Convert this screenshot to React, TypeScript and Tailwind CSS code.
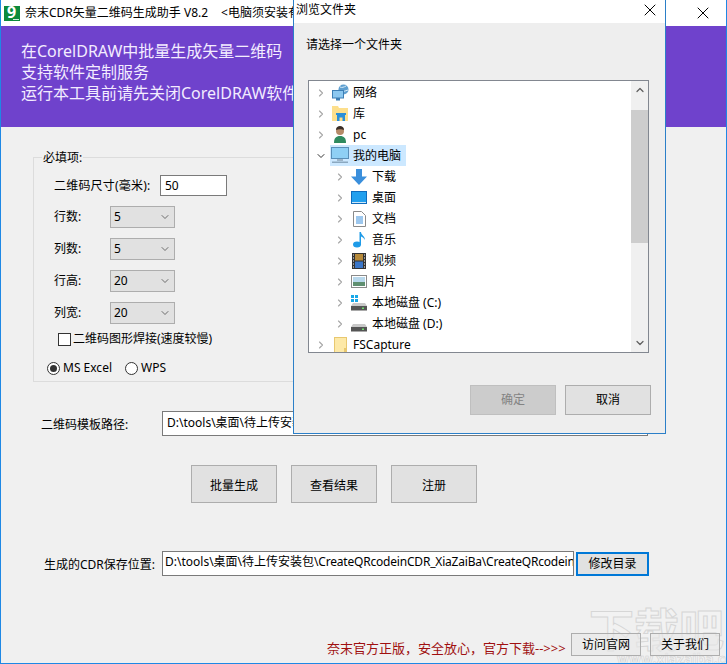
import { ChevronRight, ChevronDown, X } from 'lucide-react';

const FONT = "font-['Noto_Sans','Noto_Sans_CJK_SC',sans-serif]";

const SELECTS = [
  { label: '行数:', value: '5' },
  { label: '列数:', value: '5' },
  { label: '行高:', value: '20' },
  { label: '列宽:', value: '20' },
];

function Select({ value }: { value: string }) {
  return (
    <div className="w-[65px] h-[22px] bg-[#e1e1e1] border border-[#adadad] flex items-center justify-between pl-[3px] pr-[3px] text-[12px] text-black">
      <span>{value}</span>
      <ChevronDown className="w-[12px] h-[12px] text-[#444]" strokeWidth={1.5} />
    </div>
  );
}

function Btn({ label, className = 'bg-[#e1e1e1]' }: { label: string; className?: string }) {
  return (
    <div className={`border border-[#adadad] flex items-center justify-center text-[12px] text-black ${className}`}>
      {label}
    </div>
  );
}

/* tree icons */
function NetIcon() {
  return (
    <svg width="17" height="17" viewBox="0 0 17 17">
      <circle cx="11.5" cy="5.5" r="5" fill="#5f9fd0" />
      <path d="M8 3c2 1 4 0 6-1M8 7c3 1 5 0 8-1" stroke="#d8ecf8" fill="none" />
      <rect x="0.5" y="6.5" width="11" height="7.5" fill="#8cc8f0" stroke="#3d7fb5" />
      <rect x="4" y="14" width="4" height="2.5" fill="#3d7fb5" />
    </svg>
  );
}
function LibIcon() {
  return (
    <svg width="17" height="17" viewBox="0 0 17 17">
      <path d="M0 1h6l1 2h9v13H0z" fill="#fddf8c" />
      <path d="M5 9h8v7h-2.5v-3.5h-3V16H5z" fill="#2b8fd8" />
      <rect x="4" y="8" width="10" height="2" fill="#2b8fd8" />
    </svg>
  );
}
function UserIcon() {
  return (
    <svg width="15" height="17" viewBox="0 0 15 17">
      <path d="M1 17c0-5 2-7 6-7s6 2 6 7z" fill="#2f8a5f" />
      <circle cx="7" cy="5" r="4" fill="#b58a68" />
      <path d="M3 4c0-3 2-4 4-4s4 1 4 4c-2-1-6-1-8 0z" fill="#3a2d25" />
    </svg>
  );
}
function PcIcon() {
  return (
    <svg width="18" height="17" viewBox="0 0 18 17">
      <rect x="0.5" y="0.5" width="17" height="11" fill="#8fd0f5" stroke="#5a8fb8" />
      <rect x="6" y="12" width="6" height="2" fill="#9cb4c8" />
      <rect x="1" y="14.5" width="16" height="1.5" fill="#8aa8c0" />
    </svg>
  );
}
function DownIcon() {
  return (
    <svg width="16" height="16" viewBox="0 0 16 16">
      <path d="M5 0h6v7.500h5L8 16 0 7.500h5z" fill="#3a8fdc" />
    </svg>
  );
}
function DesktopIcon() {
  return (
    <svg width="16" height="13" viewBox="0 0 16 13">
      <rect width="16" height="13" fill="#0f6cbd" />
      <rect x="1" y="1" width="14" height="10" fill="#22a0ee" />
      <rect x="1" y="11" width="14" height="1" fill="#cfe8f8" />
    </svg>
  );
}
function DocIcon() {
  return (
    <svg width="13" height="16" viewBox="0 0 13 16">
      <path d="M.5.500h8l4 4v11H.5z" fill="#fff" stroke="#8a8a8a" />
      <path d="M3 6h7M3 8h7M3 10h7M3 12h7" stroke="#3a8fdc" />
    </svg>
  );
}
function MusicIcon() {
  return (
    <svg width="13" height="17" viewBox="0 0 13 17">
      <ellipse cx="4" cy="13.500" rx="4" ry="3" fill="#1e9be8" />
      <path d="M6.500 1h1.500c0 3 4 4 4 8-1-2-2.500-3-4-3.500V14h-1.500z" fill="#1e9be8" />
    </svg>
  );
}
function VideoIcon() {
  return (
    <svg width="14" height="16" viewBox="0 0 14 16">
      <rect width="14" height="16" fill="#333" />
      <rect x="3" y="1" width="8" height="6.500" fill="#b78a3a" />
      <rect x="3" y="8.500" width="8" height="6.500" fill="#3a76c8" />
      <path d="M1 2h1M1 5h1M1 8h1M1 11h1M1 14h1M12 2h1M12 5h1M12 8h1M12 11h1M12 14h1" stroke="#fff" />
    </svg>
  );
}
function PicIcon() {
  return (
    <svg width="16" height="13" viewBox="0 0 16 13">
      <rect x=".5" y=".5" width="15" height="12" fill="#fff" stroke="#8a8a8a" />
      <rect x="2" y="2" width="12" height="5" fill="#b8d8ec" />
      <rect x="2" y="7" width="12" height="4" fill="#5f8f70" />
    </svg>
  );
}
function DriveIcon({ win }: { win?: boolean }) {
  return (
    <svg width="16" height="16" viewBox="0 0 16 16">
      {win && <path d="M0 0h3v3H0zM4 0h3v3H4zM0 4h3v3H0zM4 4h3v3H4z" fill="#18a8e8" />}
      <path d="M2 8h12l2 3H0z" fill="#c9c9c9" />
      <rect y="11" width="16" height="4.500" fill="#555" />
      <rect x="11" y="12.500" width="2" height="1.500" fill="#6fe06f" />
    </svg>
  );
}
function FolderIcon() {
  return (
    <svg width="13" height="16" viewBox="0 0 13 16">
      <rect x=".5" y=".5" width="12" height="15" fill="#fde9a8" stroke="#e8c870" />
      <rect x="10" y="11" width="2" height="4" fill="#e8c870" />
    </svg>
  );
}

const TREE = [
  { label: '网络', icon: <NetIcon />, depth: 0 },
  { label: '库', icon: <LibIcon />, depth: 0 },
  { label: 'pc', icon: <UserIcon />, depth: 0 },
  { label: '我的电脑', icon: <PcIcon />, depth: 0, open: true },
  { label: '下载', icon: <DownIcon />, depth: 1 },
  { label: '桌面', icon: <DesktopIcon />, depth: 1 },
  { label: '文档', icon: <DocIcon />, depth: 1 },
  { label: '音乐', icon: <MusicIcon />, depth: 1 },
  { label: '视频', icon: <VideoIcon />, depth: 1 },
  { label: '图片', icon: <PicIcon />, depth: 1 },
  { label: '本地磁盘 (C:)', icon: <DriveIcon win />, depth: 1 },
  { label: '本地磁盘 (D:)', icon: <DriveIcon />, depth: 1 },
  { label: 'FSCapture', icon: <FolderIcon />, depth: 0 },
];

function FolderDialog() {
  return (
    <div className="absolute left-[292px] top-0 w-[373px] h-[434px] border border-t-0 border-[#2b7fc8] bg-[#eeeeee] flex flex-col">
      <div className="h-[23px] bg-white flex items-center justify-between pl-[2px] pr-[5px] pb-[3px] text-[12px] text-black">
        <span>浏览文件夹</span>
        <X className="w-[20px] h-[20px] text-black" strokeWidth={1.2} />
      </div>
      <div className="pl-[12px] pt-[13px] text-[12px] leading-[18px] text-black">请选择一个文件夹</div>
      <div className="ml-[14px] mt-[26px] w-[341px] h-[273px] bg-white border border-[#828790] flex overflow-hidden">
        <div className="flex-1 pt-[1px] overflow-hidden">
          {TREE.map(row => (
            <div key={row.label} className="h-[21px] flex items-center text-[12px] text-black">
              <div className={`w-[21px] shrink-0 flex justify-end pr-[3px] ${row.depth ? 'ml-[19px]' : ''}`}>
                {row.open
                  ? <ChevronDown className="w-[12px] h-[12px] text-[#333]" strokeWidth={2} />
                  : <ChevronRight className="w-[12px] h-[12px] text-[#a6a6a6]" strokeWidth={2.25} />}
              </div>
              <div className={`h-[21px] flex items-center ${row.open ? 'bg-[#cce8ff]' : ''}`}>
                <div className="w-[20px] shrink-0 flex justify-center">{row.icon}</div>
                <span className="ml-[3px] pr-[5px]">{row.label}</span>
              </div>
            </div>
          ))}
        </div>
        <div className="w-[17px] bg-[#f0f0f0] flex flex-col items-center">
          <ChevronDown className="w-[12px] h-[12px] mt-[3px] text-[#606060] rotate-180" strokeWidth={2.5} />
          <div className="w-[17px] h-[133px] bg-[#cdcdcd] mt-[14px]" />
          <ChevronDown className="w-[12px] h-[12px] mt-auto mb-[3px] text-[#606060]" strokeWidth={2.5} />
        </div>
      </div>
      <div className="flex ml-[176px] mt-[32px] gap-[9px]">
        <div className="w-[86px] h-[30px] bg-[#cccccc] border border-[#bfbfbf] flex items-center justify-center text-[12px] text-[#838383]">确定</div>
        <Btn label="取消" className="bg-[#e1e1e1] w-[86px] h-[30px]" />
      </div>
    </div>
  );
}

export default function App() {
  return (
    <div className={`${FONT} relative w-[727px] h-[664px] overflow-hidden bg-[#f0f0f0] border-l border-r border-b border-[#1e88e5]`}>
      {/* Site watermark, behind the footer */}
      <div className="absolute left-[588px] top-[604px] text-[45px] leading-[52px] font-bold text-[#f5f5f5]/60 [-webkit-text-stroke:1px_#d6d6d6] whitespace-nowrap pointer-events-none">下载吧</div>
      <div className="absolute left-[616px] top-[652px] text-[14px] leading-[14px] font-bold text-[#f5f5f5]/60 [-webkit-text-stroke:0.5px_#cfcfcf] whitespace-nowrap pointer-events-none">www.xiazaiba.com</div>

      {/* Title bar */}
      <header className="h-[26px] bg-white flex items-center pl-[3px] text-[12px] text-black whitespace-nowrap">
        <div className="relative w-[16px] h-[15px] bg-[#0b8a3c] overflow-hidden">
          <span className="absolute left-[3px] -top-[3px] text-white text-[16px] font-bold leading-[18px]">9</span>
          <span className="absolute left-[9px] bottom-[1px] w-[6px] h-[1px] bg-[#cfeedd]" />
        </div>
        <span className="ml-[5px]">奈末CDR矢量二维码生成助手 V8.2</span>
        <span className="ml-[13px]">&lt;电脑须安装有CorelDRAW软件&gt;</span>
        <X className="absolute left-[692px] top-[3px] w-[20px] h-[20px] text-black" strokeWidth={1.2} />
      </header>

      {/* Banner */}
      <div className="h-[101px] bg-[#6f42cc] pl-[20px] pt-[15px] text-[16px] leading-[21px] text-[#f3ecff] whitespace-nowrap">
        <p>在CorelDRAW中批量生成矢量二维码</p>
        <p>支持软件定制服务</p>
        <p>运行本工具前请先关闭CorelDRAW软件</p>
      </div>

      {/* Required fields */}
      <div className="relative ml-[32px] mt-[30px] w-[600px] h-[225px] border border-[#dcdcdc] text-[12px] text-black pl-[20px] pt-[17px]">
        <span className="absolute -top-[9px] left-[8px] px-[1px] bg-[#f0f0f0] leading-[18px]">必填项:</span>
        <div className="flex items-center h-[21px]">
          <span className="w-[106px] tracking-[0.2px]">二维码尺寸(毫米):</span>
          <div className="w-[67px] h-[21px] bg-white border border-[#7a7a7a] pl-[4px] leading-[19px]">50</div>
        </div>
        <div className="mt-[10px] flex flex-col gap-[10px]">
          {SELECTS.map(s => (
            <div key={s.label} className="flex items-center h-[22px]">
              <span className="w-[56px]">{s.label}</span>
              <Select value={s.value} />
            </div>
          ))}
        </div>
        <div className="flex items-center mt-[8px] ml-[4px] h-[14px]">
          <div className="w-[13px] h-[13px] bg-white border border-[#333]" />
          <span className="ml-[2px]">二维码图形焊接(速度较慢)</span>
        </div>
        <div className="flex items-center mt-[15px] -ml-[7px] h-[14px]">
          <div className="w-[13px] h-[13px] rounded-full bg-white border border-[#333] flex items-center justify-center">
            <div className="w-[7px] h-[7px] rounded-full bg-[#333]" />
          </div>
          <span className="ml-[3px]">MS Excel</span>
          <div className="w-[13px] h-[13px] rounded-full bg-white border border-[#333] ml-[13px]" />
          <span className="ml-[3px]">WPS</span>
        </div>
      </div>

      {/* Template path */}
      <div className="flex items-center mt-[29px] text-[12px] text-black">
        <span className="ml-[40px] w-[121px] pt-[2px]">二维码模板路径:</span>
        <div className="w-[486px] h-[25px] bg-white border border-[#7a7a7a] pl-[4px] leading-[22px] whitespace-nowrap overflow-hidden">D:\tools\桌面\待上传安装包\CreateQRcodeinCDR_XiaZaiBa</div>
      </div>

      {/* Actions */}
      <div className="flex ml-[190px] mt-[29px] gap-[14px]">
        <Btn label="批量生成" className="bg-[#e1e1e1] w-[86px] h-[38px] pt-[3px]" />
        <Btn label="查看结果" className="bg-[#e1e1e1] w-[86px] h-[38px] pt-[3px]" />
        <Btn label="注册" className="bg-[#e1e1e1] w-[86px] h-[38px] pt-[3px]" />
      </div>

      {/* Output path */}
      <div className="flex items-center mt-[48px] text-[12px] text-black">
        <span className="ml-[43px] w-[118px] pt-[2px]">生成的CDR保存位置:</span>
        <div className="w-[412px] h-[25px] bg-white border border-[#7a7a7a] pl-[2px] leading-[20px] whitespace-nowrap overflow-hidden">
          D:\tools\桌面\待上传安装包<span className="tracking-[-0.2px]">\CreateQRcodeinCDR_XiaZaiBa\CreateQRcodeinCDR</span>
        </div>
        <div className="ml-[2px] w-[73px] h-[24px] bg-[#e1e1e1] border-2 border-[#0078d7] flex items-center justify-center">修改目录</div>
      </div>

      {/* Footer */}
      <div className="relative flex items-center mt-[55px] text-[12px] whitespace-nowrap">
        <span className="ml-[326px] w-[244px] mt-[8px] text-[13px] text-[#a01010]">奈末官方正版，安全放心，官方下载--&gt;&gt;&gt;</span>
        <Btn label="访问官网" className="bg-[#e8e8e8]/60 w-[70px] h-[23px]" />
        <Btn label="关于我们" className="bg-[#e8e8e8]/60 w-[70px] h-[23px] ml-[9px]" />
      </div>

      <FolderDialog />
    </div>
  );
}
